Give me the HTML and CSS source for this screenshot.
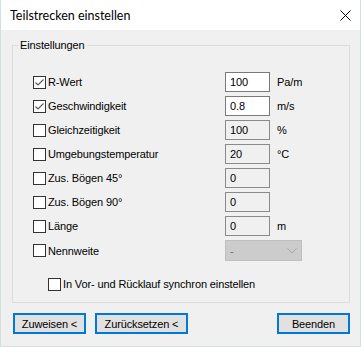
FILE: index.html
```html
<!DOCTYPE html>
<html lang="de">
<head>
    <meta charset="UTF-8">
    <title>Teilstrecken einstellen</title>
    <link rel="stylesheet" href="styles.css">
</head>
<body>
    <div class="window">
        <div class="titlebar">
            <span class="title">Teilstrecken einstellen</span>
            <svg class="close" width="11" height="11" viewBox="0 0 11 11">
                <path d="M0.5 0.5 L10.5 10.5 M10.5 0.5 L0.5 10.5" stroke="#000" stroke-width="1" fill="none"/>
            </svg>
        </div>

        <div class="content">
            <fieldset class="group">
                <legend>Einstellungen</legend>

                <div class="rows">
                    <div class="check"><span class="box"><svg width="11" height="11" viewBox="0 0 11 11"><path d="M1.5 5.5 L4 8 L9.5 2.5" stroke="#555" stroke-width="1.1" fill="none"/></svg></span>R-Wert</div>
                    <div class="field">100</div>
                    <div class="unit">Pa/m</div>

                    <div class="check"><span class="box"><svg width="11" height="11" viewBox="0 0 11 11"><path d="M1.5 5.5 L4 8 L9.5 2.5" stroke="#555" stroke-width="1.1" fill="none"/></svg></span>Geschwindigkeit</div>
                    <div class="field">0.8</div>
                    <div class="unit">m/s</div>

                    <div class="check"><span class="box"></span>Gleichzeitigkeit</div>
                    <div class="field off">100</div>
                    <div class="unit">%</div>

                    <div class="check"><span class="box"></span>Umgebungstemperatur</div>
                    <div class="field off">20</div>
                    <div class="unit">°C</div>

                    <div class="check"><span class="box"></span>Zus. Bögen 45°</div>
                    <div class="field off">0</div>
                    <div class="unit"></div>

                    <div class="check"><span class="box"></span>Zus. Bögen 90°</div>
                    <div class="field off">0</div>
                    <div class="unit"></div>

                    <div class="check"><span class="box"></span>Länge</div>
                    <div class="field off">0</div>
                    <div class="unit">m</div>

                    <div class="check"><span class="box"></span>Nennweite</div>
                    <div class="combo">
                        <span>-</span>
                        <svg width="10" height="6" viewBox="0 0 10 6"><path d="M0.5 0.5 L5 5 L9.5 0.5" stroke="#a6a6a6" stroke-width="1" fill="none"/></svg>
                    </div>
                </div>

                <div class="check sync"><span class="box"></span>In Vor- und Rücklauf synchron einstellen</div>
            </fieldset>

            <div class="buttons">
                <button class="btn">Zuweisen &lt;</button>
                <button class="btn wide">Zurücksetzen &lt;</button>
                <button class="btn end">Beenden</button>
            </div>
        </div>
    </div>
</body>
</html>
```

FILE: styles.css
```css
body {
    margin: 0;
    font-family: "Liberation Sans", Arial, sans-serif;
    font-size: 11px;
    letter-spacing: -0.12px;
    color: #000;
}

.window {
    width: 361px;
    height: 347px;
    box-sizing: border-box;
    border: 1px solid #cfe3dd;
    border-top: none;
    background: #f0f0f0;
    display: flex;
    flex-direction: column;
}

/* title bar */
.titlebar {
    height: 30px;
    background: #fff;
    display: flex;
    align-items: center;
    justify-content: space-between;
    padding: 0 9px 0 9px;
}

.title {
    font-family: Lato, sans-serif;
    font-size: 12.5px;
    letter-spacing: 0;
}

.close {
    display: block;
}

/* group box */
.group {
    margin: 8px 10px 0 11px;
    padding: 0 0 8px 0;
    border: 1px solid #dcdcdc;
    min-width: 0;
}

.group legend {
    margin-left: 5px;
    padding: 0 2px;
    line-height: 14px;
}

.rows {
    display: grid;
    grid-template-columns: 192px 45px auto;
    grid-template-rows: repeat(7, 20px) 21px;
    row-gap: 4px;
    align-items: center;
    margin-top: 20px;
    padding-left: 20px;
}

.check {
    display: flex;
    align-items: center;
    gap: 2px;
}

.box {
    width: 13px;
    height: 13px;
    box-sizing: border-box;
    border: 1px solid #333;
    background: #fff;
    display: flex;
    align-items: center;
    justify-content: center;
}

.box svg {
    display: block;
}

.field {
    box-sizing: border-box;
    width: 45px;
    height: 20px;
    border: 1px solid #7a7a7a;
    background: #fff;
    padding-left: 4px;
    line-height: 18px;
}

.field.off {
    background: #f0f0f0;
    border-color: #8a8a8a;
}

.unit {
    margin-left: 7px;
}

.combo {
    grid-column: 2 / 4;
    box-sizing: border-box;
    width: 77px;
    height: 21px;
    background: #cccccc;
    border: 1px solid #bfbfbf;
    color: #6d6d6d;
    display: flex;
    align-items: center;
    justify-content: space-between;
    padding: 0 4px 0 4px;
}

.sync {
    height: 20px;
    margin-top: 13px;
    padding-left: 35px;
}

/* buttons */
.buttons {
    display: flex;
    gap: 9px;
    margin-top: 10px;
    padding: 0 10px 0 12px;
}

.btn {
    width: 73px;
    height: 21px;
    padding: 0;
    border: 2px solid #0078d7;
    background: #e1e1e1;
    font-family: "Liberation Sans", Arial, sans-serif;
    font-size: 11px;
    letter-spacing: -0.12px;
    color: #000;
}

.btn.wide {
    width: 93px;
}

.btn.end {
    margin-left: auto;
}
```
